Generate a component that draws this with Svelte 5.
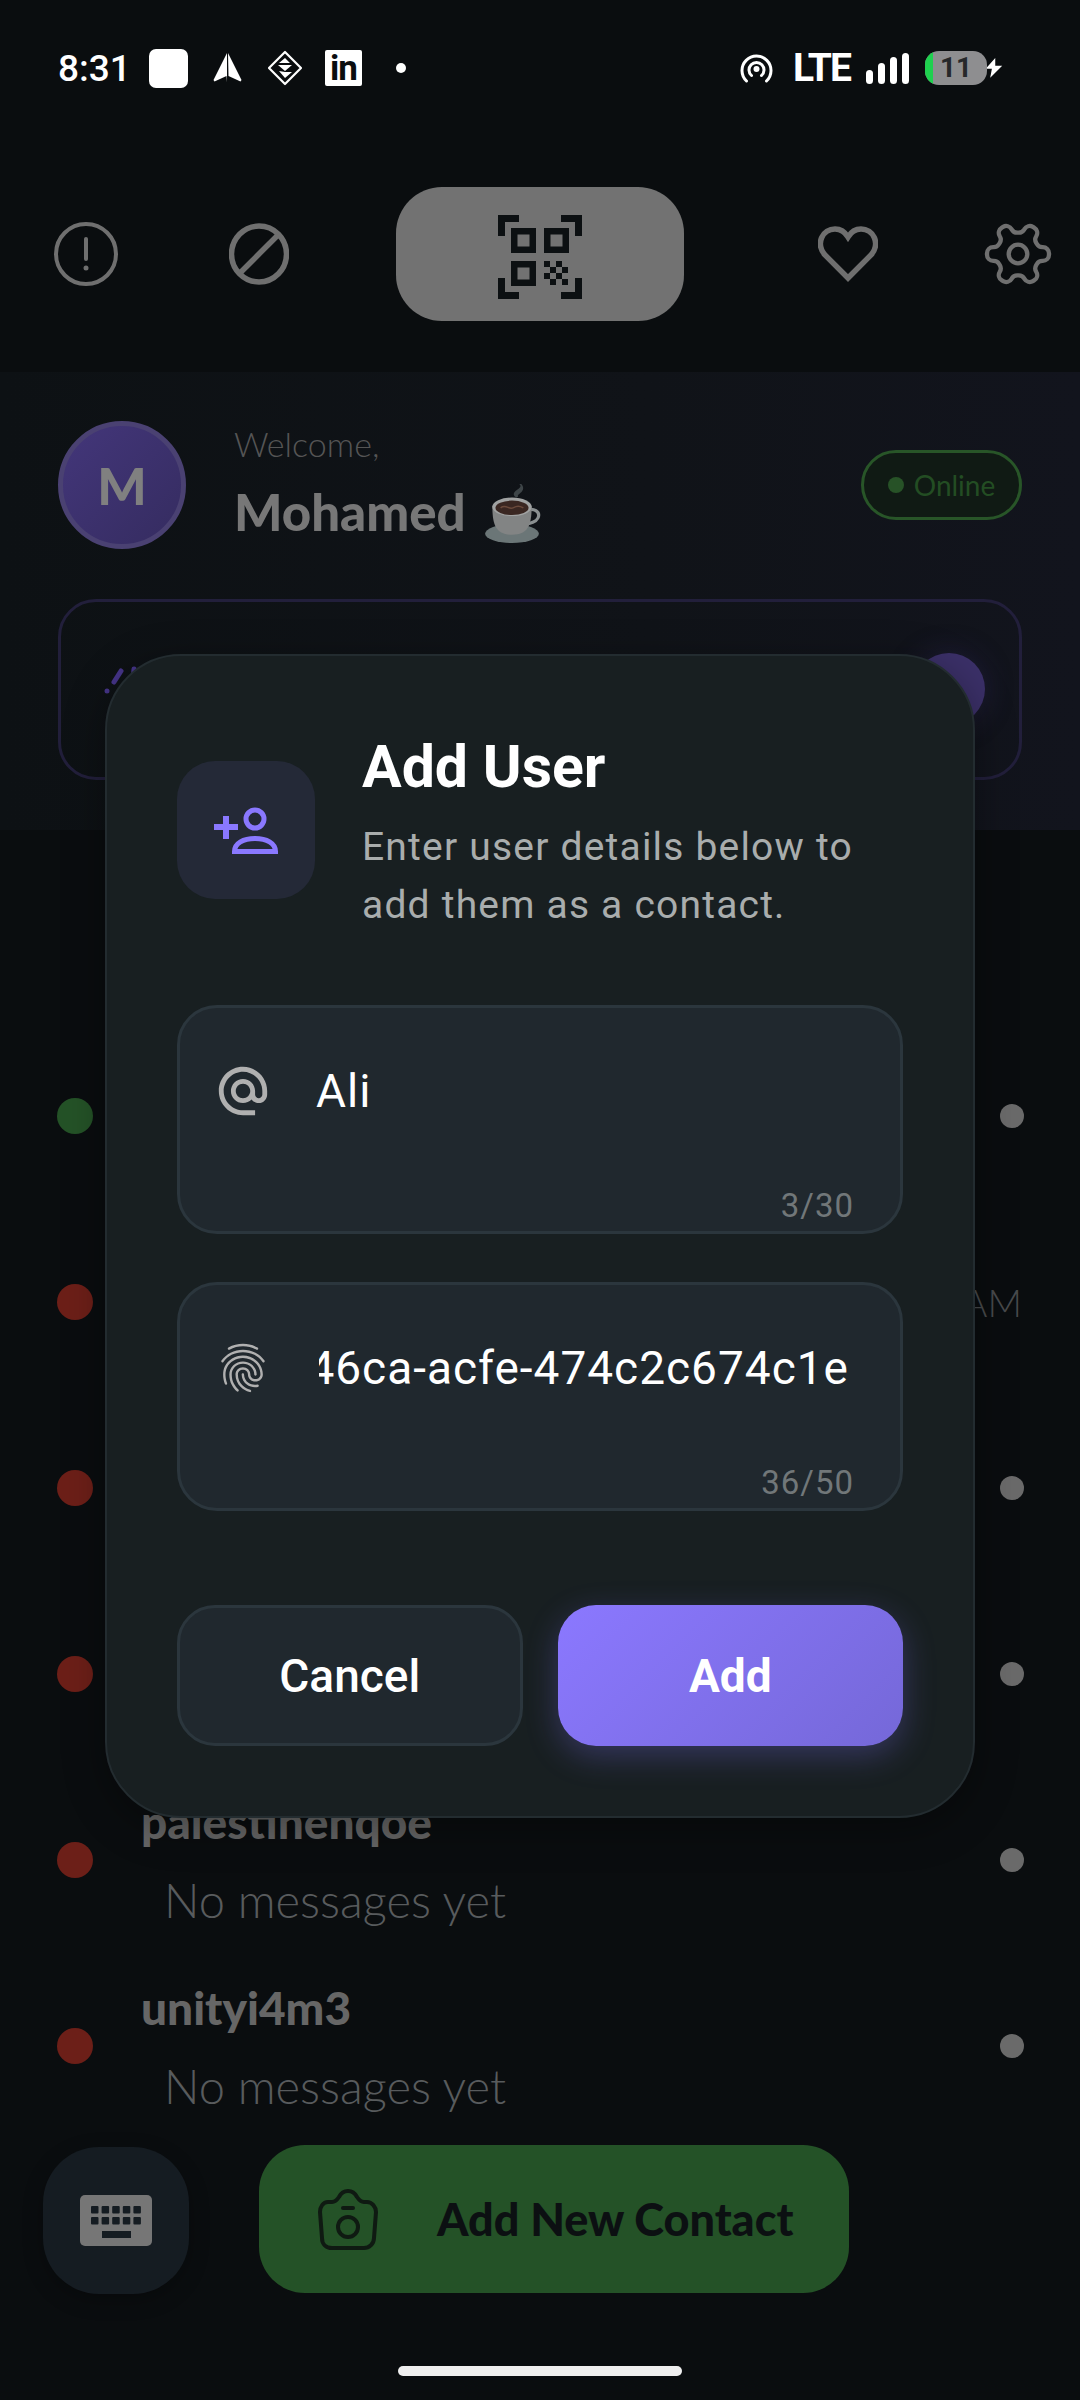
<script>
  const contacts = [
    { name: '', message: '', online: true, time: '' },
    { name: '', message: '', online: false, time: '9:14 AM' },
    { name: '', message: '', online: false, time: '' },
    { name: '', message: '', online: false, time: '' },
    { name: 'palestinenqoe', message: 'No messages yet', online: false, time: '' },
    { name: 'unityi4m3', message: 'No messages yet', online: false, time: '' }
  ];
</script>

<div class="page">
  <div class="statusbar">
    <div class="status-left">
      <span class="clock">8:31</span>
      <span class="blank"></span>
      <svg class="plane" viewBox="0 0 29 30"><path d="M15 0 28.500 27l-1 1.500L15.500 23zM14 0 .5 27l1 1.500L13.500 23l.5 6.500z" fill="#fff"/></svg>
      <svg class="diamond" viewBox="0 0 36 36">
        <path d="M18 2 34 18 18 34 2 18z" fill="none" stroke="#fff" stroke-width="2.200" stroke-linejoin="round"/>
        <path d="M18 8l5 5h-5zM18 13h-6l6-5zM11 15h7v6zM18 15h7l-7 6zM18 22h7l-7 6zM12 21l6 1v6z" fill="#fff"/>
      </svg>
      <span class="linkedin">in</span>
      <span class="notif-dot"></span>
    </div>
    <div class="status-right">
      <svg class="hotspot" viewBox="0 0 33 30" fill="none" stroke="#fff" stroke-width="3" stroke-linecap="round">
        <path d="M6.500 28A14.500 14.500 0 1 1 26.500 28"/>
        <path d="M11.500 22.500A7.500 7.500 0 1 1 21.500 22.500"/>
        <circle cx="16.500" cy="16" r="3" fill="#fff" stroke="none"/>
      </svg>
      <span class="lte">LTE</span>
      <div class="signal">
        <span style="height: 14px"></span>
        <span style="height: 21px"></span>
        <span style="height: 27px"></span>
        <span style="height: 31px"></span>
      </div>
      <div class="battery"><span class="charge"></span><span class="level">11</span></div>
      <svg class="bolt" viewBox="0 0 22 24"><path d="M13 0 1 13.500h7L6 24 21 9h-8z" fill="#fff" stroke="#0a0d0f" stroke-width="1.500"/></svg>
    </div>
  </div>

  <div class="toolbar">
    <svg class="alert" viewBox="0 0 64 64" fill="none" stroke="#6f6f6f" stroke-width="4">
      <circle cx="32" cy="32" r="30"/>
      <path d="M32 17v20" stroke-linecap="round"/>
      <circle cx="32" cy="46" r="2.500" fill="#6f6f6f" stroke="none"/>
    </svg>
    <svg class="ban" viewBox="0 0 60 62" fill="none" stroke="#6f6f6f" stroke-width="5.500">
      <ellipse cx="30" cy="31" rx="27.500" ry="28"/>
      <path d="M11 50 49 12"/>
    </svg>
    <div class="qr-btn">
      <svg viewBox="0 0 84 84" width="84" height="84" fill="#0c1012">
        <path d="M0 0h21v7H7v14H0zM63 0h21v21h-7V7H63zM0 63h7v14h14v7H0zM77 63h7v21H63v-7h14z"/>
        <path fill-rule="evenodd" d="M13 13h25v25H13zM19.500 19.500v12h12v-12zM46 13h25v25H46zM52.500 19.500v12h12v-12zM13 46h25v25H13zM19.500 52.500v12h12v-12z"/>
        <path d="M46 46h6v6h-6zM58 46h6v6h-6zM52 52h6v6h-6zM64 52h6v6h-6zM46 58h6v6h-6zM58 58h6v6h-6zM52 64h6v6h-6zM64 64h6v6h-6z"/>
      </svg>
    </div>
    <svg class="heart" viewBox="0 0 60 56" fill="none" stroke="#6f6f6f" stroke-width="5.500">
      <path d="M30 52 7 29C-3 17 5 3 17 3c6 0 10 3 13 8 3-5 7-8 13-8 12 0 20 14 10 26z"/>
    </svg>
    <svg class="gear" viewBox="2 2 20 20" fill="none" stroke="#6f6f6f" stroke-width="1.400">
      <g transform="rotate(90 12 12)">
        <path d="M12.220 2h-.44a2 2 0 0 0-2 2v.18a2 2 0 0 1-1 1.730l-.43.25a2 2 0 0 1-2 0l-.15-.08a2 2 0 0 0-2.730.73l-.22.38a2 2 0 0 0 .73 2.730l.15.1a2 2 0 0 1 1 1.720v.51a2 2 0 0 1-1 1.740l-.15.09a2 2 0 0 0-.73 2.730l.22.38a2 2 0 0 0 2.730.73l.15-.08a2 2 0 0 1 2 0l.43.25a2 2 0 0 1 1 1.730V20a2 2 0 0 0 2 2h.44a2 2 0 0 0 2-2v-.18a2 2 0 0 1 1-1.730l.43-.25a2 2 0 0 1 2 0l.15.08a2 2 0 0 0 2.730-.73l.22-.39a2 2 0 0 0-.73-2.730l-.15-.08a2 2 0 0 1-1-1.740v-.5a2 2 0 0 1 1-1.740l.15-.09a2 2 0 0 0 .73-2.730l-.22-.38a2 2 0 0 0-2.730-.73l-.15.08a2 2 0 0 1-2 0l-.43-.25a2 2 0 0 1-1-1.730V4a2 2 0 0 0-2-2z"/>
        <circle cx="12" cy="12" r="3"/>
      </g>
    </svg>
  </div>

  <section class="panel">
    <div class="profile">
      <div class="avatar">M</div>
      <div class="who">
        <div class="welcome">Welcome,</div>
        <div class="username">
          Mohamed
          <svg class="coffee" viewBox="0 0 58 58">
            <path d="M36 1c5 4-7 6-5 11 1 2 3 2 4 1-2-2 9-5 3-12z" fill="#3e4548"/>
            <ellipse cx="29" cy="49" rx="26" ry="9" fill="#6b7677"/>
            <path d="M42 27c8-4 15 1 12 7-2 4-7 5-12 6" fill="none" stroke="#8a8f90" stroke-width="3"/>
            <path d="M10 22c0 18 3 28 19 28s19-10 19-28z" fill="#828484"/>
            <ellipse cx="29" cy="23" rx="19" ry="9" fill="#a0a2a2"/>
            <ellipse cx="29" cy="24" rx="16" ry="7" fill="#3a2722"/>
            <path d="M18 24c5-4 8 2 12 0s6-2 10 0" fill="none" stroke="#6b4a3c" stroke-width="1.500"/>
          </svg>
        </div>
      </div>
      <div class="pill"><span class="pill-dot"></span>Online</div>
    </div>
    <div class="conn-card">
      <svg class="spark" viewBox="0 0 40 40" fill="none" stroke="#46358a" stroke-width="5" stroke-linecap="round">
        <path d="M21 6 14 17"/>
        <path d="M34 4 33 16"/>
        <circle cx="7" cy="26" r="2.500" fill="#46358a" stroke="none"/>
      </svg>
      <span class="conn-label">Connection</span>
      <span class="conn-toggle"></span>
    </div>
  </section>

  <div class="contacts">
    {#each contacts as c}
      <div class="contact">
        <span class="presence" class:online={c.online}></span>
        <div class="contact-body">
          <div class="contact-name">{c.name}</div>
          <div class="contact-msg">{c.message}</div>
        </div>
        {#if c.time}
          <span class="contact-time">{c.time}</span>
        {:else}
          <span class="unread"></span>
        {/if}
      </div>
    {/each}
  </div>

  <div class="bottom">
    <div class="kbd-btn">
      <svg viewBox="0 0 72 51" width="72" height="51">
        <rect width="72" height="51" rx="5" fill="#767676"/>
        <g fill="#151c22">
          {#each [0, 1] as r}
            {#each [0, 1, 2, 3, 4] as k}
              <rect x={11 + k * 10.600} y={11 + r * 11} width="7.500" height="7.500" rx="1"/>
            {/each}
          {/each}
          <rect x="22" y="36" width="29" height="7"/>
        </g>
      </svg>
    </div>
    <div class="add-contact">
      <svg class="camera" viewBox="0 0 60 61" fill="none" stroke="#0f1a12" stroke-width="4" stroke-linecap="round" stroke-linejoin="round">
        <path d="M10 13h4c3 0 5-2 7-5 2-4 5-6 9-6s7 2 9 6c2 3 4 5 7 5h3c5 0 9 5 9 10l-2 26c0 6-5 10-10 10H14C8 59 4 55 4 49L2 23c0-5 3-10 8-10z"/>
        <path d="M25 19h10"/>
        <circle cx="30" cy="38" r="10"/>
      </svg>
      <span>Add New Contact</span>
    </div>
  </div>

  <div class="home"></div>

  <div class="modal">
    <div class="modal-head">
      <div class="modal-icon">
        <svg viewBox="0 0 64 47" width="64" height="47" fill="none" stroke="#8a78ff" stroke-width="5">
          <circle cx="41" cy="12" r="9"/>
          <path d="M0 20h24M12 9v23" stroke-width="6"/>
          <path d="M20.500 44.500c0-8.500 9-13 20.500-13s20.500 4.500 20.500 13z"/>
        </svg>
      </div>
      <div class="modal-text">
        <h2>Add User</h2>
        <p>Enter user details below to add them as a contact.</p>
      </div>
    </div>

    <div class="field first">
      <div class="field-row">
        <svg viewBox="0 0 24 24" width="58" height="58"><path fill="#b0b0b0" d="M12 2C6.480 2 2 6.480 2 12s4.480 10 10 10h5v-2h-5c-4.340 0-8-3.660-8-8s3.660-8 8-8 8 3.660 8 8v1.430c0 .79-.71 1.570-1.500 1.570s-1.500-.78-1.500-1.570V12c0-2.760-2.240-5-5-5s-5 2.240-5 5 2.240 5 5 5c1.380 0 2.640-.56 3.540-1.470.65.89 1.770 1.470 2.960 1.470 1.970 0 3.500-1.600 3.500-3.570V12c0-5.520-4.480-10-10-10zm0 13c-1.660 0-3-1.340-3-3s1.340-3 3-3 3 1.340 3 3-1.340 3-3 3z"/></svg>
        <div class="value">Ali</div>
      </div>
      <div class="counter">3/30</div>
    </div>

    <div class="field">
      <div class="field-row">
        <svg viewBox="0 0 24 24" width="58" height="58"><path fill="#b0b0b0" d="M17.810 4.470c-.08 0-.16-.02-.23-.06C15.660 3.420 14 3 12.010 3c-1.980 0-3.860.47-5.580 1.410-.24.13-.54.04-.68-.2-.13-.24-.04-.55.2-.68C7.820 2.520 9.860 2 12.010 2c2.130 0 3.990.47 6.030 1.520.25.13.34.43.21.67-.09.18-.26.28-.44.28zM3.500 9.720c-.1 0-.2-.03-.29-.09-.23-.16-.28-.47-.12-.7.99-1.400 2.250-2.500 3.750-3.270C9.980 4.040 14 4.030 17.150 5.650c1.500.77 2.760 1.860 3.750 3.250.16.22.11.54-.12.7-.23.16-.54.11-.7-.12-.9-1.260-2.040-2.250-3.390-2.940-2.870-1.470-6.540-1.470-9.400.01-1.360.7-2.500 1.700-3.400 2.960-.08.14-.23.21-.39.21zm6.250 12.070c-.13 0-.26-.05-.35-.15-.87-.87-1.340-1.430-2.010-2.640-.69-1.230-1.050-2.730-1.050-4.340 0-2.970 2.540-5.390 5.660-5.390s5.660 2.420 5.660 5.390c0 .28-.22.5-.5.5s-.5-.22-.5-.5c0-2.420-2.090-4.390-4.660-4.390-2.570 0-4.660 1.970-4.660 4.390 0 1.440.32 2.770.93 3.850.64 1.150 1.080 1.640 1.850 2.420.19.2.19.51 0 .71-.11.1-.24.15-.37.15zm7.170-1.850c-1.190 0-2.240-.3-3.100-.89-1.490-1.010-2.380-2.650-2.380-4.390 0-.28.22-.5.5-.5s.5.22.5.5c0 1.410.72 2.740 1.940 3.560.71.48 1.540.71 2.540.71.24 0 .64-.03 1.040-.1.27-.05.53.13.58.41.05.27-.13.53-.41.58-.57.11-1.070.12-1.210.12zM14.910 22c-.04 0-.09-.01-.13-.02-1.590-.44-2.630-1.030-3.720-2.100-1.400-1.390-2.170-3.240-2.170-5.220 0-1.620 1.380-2.940 3.080-2.940 1.700 0 3.080 1.320 3.080 2.940 0 1.070.93 1.940 2.080 1.940s2.080-.87 2.080-1.940c0-3.770-3.250-6.830-7.250-6.830-2.840 0-5.440 1.580-6.610 4.030-.39.81-.59 1.760-.59 2.800 0 .78.07 2.010.67 3.610.1.26-.03.55-.29.64-.26.1-.55-.04-.64-.29-.49-1.310-.73-2.610-.73-3.960 0-1.200.23-2.290.68-3.240 1.330-2.790 4.280-4.600 7.510-4.600 4.550 0 8.250 3.510 8.250 7.830 0 1.620-1.380 2.940-3.080 2.940s-3.080-1.320-3.080-2.940c0-1.070-.93-1.940-2.080-1.940s-2.080.87-2.080 1.940c0 1.710.66 3.310 1.870 4.510.95.94 1.860 1.460 3.270 1.850.27.07.42.35.35.61-.05.23-.26.38-.47.38z"/></svg>
        <div class="value scroll"><span>8f2d1c3a-9b7e-46ca-acfe-474c2c674c1e</span></div>
      </div>
      <div class="counter">36/50</div>
    </div>

    <div class="actions">
      <button class="btn cancel">Cancel</button>
      <button class="btn add">Add</button>
    </div>
  </div>
</div>

<style>
  :global(body) {
    background: #0a0d0f;
  }

  .page {
    position: relative;
    width: 1080px;
    height: 2400px;
    overflow: hidden;
    background: #0a0d0f;
    font-family: "Lato", "Noto Sans", sans-serif;
  }

  /* status bar */
  .statusbar {
    height: 136px;
    display: flex;
    justify-content: space-between;
    align-items: center;
    padding: 0 75px 0 59px;
    font-family: "Roboto", sans-serif;
    color: #fff;
  }
  .status-left, .status-right {
    display: flex;
    align-items: center;
  }
  .clock {
    width: 67px;
    margin-left: -1px;
    margin-right: 1px;
    font-size: 37px;
    font-weight: 500;
  }
  .blank {
    width: 39px;
    height: 39px;
    margin-left: 23px;
    background: #fff;
    border-radius: 7px;
  }
  .plane {
    width: 29px;
    height: 30px;
    margin-left: 25px;
  }
  .diamond {
    width: 36px;
    height: 36px;
    margin-left: 25px;
  }
  .linkedin {
    width: 37px;
    height: 36px;
    margin-left: 22px;
    background: #fff;
    border-radius: 2px;
    color: #0a0d0f;
    font-size: 35px;
    font-weight: 700;
    line-height: 38px;
    text-align: center;
    letter-spacing: -1px;
  }
  .notif-dot {
    width: 10px;
    height: 10px;
    margin-left: 34px;
    background: #fff;
    border-radius: 50%;
  }
  .hotspot {
    width: 33px;
    height: 30px;
    margin-left: -3px;
  }
  .lte {
    margin-left: 20px;
    width: 57px;
    font-size: 39px;
    font-weight: 700;
    line-height: 40px;
    letter-spacing: -2px;
  }
  .signal {
    display: flex;
    align-items: flex-end;
    gap: 5px;
    margin-left: 16px;
  }
  .signal span {
    width: 7px;
    background: #fff;
    border-radius: 4px;
  }
  .battery {
    position: relative;
    width: 62px;
    height: 34px;
    margin-left: 16px;
    background: #8e8e90;
    border-radius: 14px;
    overflow: hidden;
    text-align: center;
    color: #26282a;
    font-size: 28px;
    font-weight: 700;
    line-height: 34px;
  }
  .charge {
    position: absolute;
    left: 0;
    top: 0;
    bottom: 0;
    width: 8px;
    background: #1fd14f;
  }
  .bolt {
    width: 22px;
    height: 24px;
    margin-left: -4px;
  }

  /* top actions */
  .toolbar {
    display: flex;
    align-items: center;
    height: 134px;
    margin-top: 51px;
    padding-left: 54px;
  }
  .alert {
    width: 64px;
    height: 64px;
  }
  .ban {
    width: 60px;
    height: 62px;
    margin-left: 111px;
  }
  .qr-btn {
    width: 288px;
    height: 134px;
    margin-left: 107px;
    padding-top: 6px;
    box-sizing: border-box;
    display: flex;
    align-items: center;
    justify-content: center;
    background: #727272;
    border-radius: 46px;
  }
  .heart {
    width: 60px;
    height: 56px;
    margin-left: 134px;
  }
  .gear {
    width: 62px;
    height: 62px;
    margin-left: 109px;
    overflow: visible;
  }

  /* profile panel */
  .panel {
    height: 458px;
    box-sizing: border-box;
    margin-top: 51px;
    padding: 49px 58px 0;
    background: linear-gradient(90deg, #0d1114 0%, #101318 60%, #12141d 100%);
  }
  .profile {
    display: flex;
    align-items: center;
    height: 128px;
  }
  .avatar {
    width: 128px;
    height: 128px;
    box-sizing: border-box;
    flex: none;
    display: flex;
    align-items: center;
    justify-content: center;
    border: 5px solid #4a4172;
    border-radius: 50%;
    background: linear-gradient(135deg, #43367a, #352c60);
    color: #808080;
    font-size: 52px;
    font-weight: 900;
  }
  .who {
    flex: 1;
    margin-left: 48px;
  }
  .welcome {
    font-size: 34px;
    font-weight: 300;
    color: #555;
    line-height: 44px;
  }
  .username {
    display: flex;
    align-items: center;
    gap: 16px;
    height: 74px;
    margin-top: 8px;
    font-size: 51px;
    font-weight: 900;
    color: #777;
  }
  .coffee {
    width: 60px;
    height: 60px;
    margin-top: 4px;
  }
  .pill {
    width: 161px;
    height: 70px;
    box-sizing: border-box;
    display: flex;
    align-items: center;
    justify-content: center;
    gap: 10px;
    border: 3px solid #285528;
    border-radius: 35px;
    background: #101a14;
    color: #234d23;
    font-size: 28px;
  }
  .pill-dot {
    width: 16px;
    height: 16px;
    background: #275227;
    border-radius: 50%;
  }
  .conn-card {
    height: 181px;
    box-sizing: border-box;
    display: flex;
    align-items: flex-start;
    margin-top: 50px;
    padding: 53px 34px 0 39px;
    border: 3px solid #221f3b;
    border-radius: 38px;
  }
  .spark {
    width: 40px;
    height: 40px;
    margin-top: 10px;
  }
  .conn-label {
    margin: -7px 0 0 55px;
    flex: 1;
    color: #666;
    font-size: 38px;
  }
  .conn-toggle {
    width: 72px;
    height: 72px;
    margin-top: -2px;
    background: #3b3068;
    border-radius: 50%;
    box-shadow: 0 0 30px rgba(70, 55, 140, 0.25);
  }

  /* contact list */
  .contacts {
    margin-top: 193px;
  }
  .contact {
    height: 186px;
    display: flex;
    align-items: center;
    padding: 0 56px 0 57px;
  }
  .presence {
    width: 36px;
    height: 36px;
    flex: none;
    background: #6c1f18;
    border-radius: 50%;
  }
  .presence.online {
    background: #245227;
  }
  .contact-body {
    flex: 1;
    margin-left: 48px;
  }
  .contact-name {
    height: 76px;
    color: #666;
    font-size: 46px;
    font-weight: 900;
    line-height: 76px;
  }
  .contact-msg {
    height: 76px;
    margin-left: 23px;
    color: #585b5d;
    font-size: 47px;
    font-weight: 300;
    line-height: 80px;
  }
  .unread {
    width: 24px;
    height: 24px;
    flex: none;
    background: #6a6a6a;
    border-radius: 50%;
  }
  .contact-time {
    margin-right: 2px;
    color: #484a4c;
    font-size: 38px;
    font-weight: 300;
  }

  /* bottom actions */
  .bottom {
    display: flex;
    align-items: center;
    height: 148px;
    margin-top: 6px;
    padding-left: 43px;
  }
  .kbd-btn {
    width: 146px;
    height: 147px;
    margin-top: 3px;
    display: flex;
    align-items: center;
    justify-content: center;
    background: #151c22;
    border-radius: 56px;
    box-shadow: 0 6px 20px rgba(0, 0, 0, 0.25);
  }
  .add-contact {
    width: 590px;
    height: 148px;
    box-sizing: border-box;
    display: flex;
    align-items: center;
    margin-left: 70px;
    padding-left: 59px;
    background: #245227;
    border-radius: 46px;
    color: #0c1012;
    font-size: 45px;
    font-weight: 900;
  }
  .camera {
    width: 60px;
    height: 61px;
    margin-right: 59px;
    overflow: visible;
  }

  .home {
    width: 284px;
    height: 10px;
    margin: 73px auto 0;
    background: #efefef;
    border-radius: 5px;
  }

  /* dialog on top of the dimmed page */
  .modal {
    position: absolute;
    left: 105px;
    top: 654px;
    width: 870px;
    height: 1164px;
    box-sizing: border-box;
    padding: 76px 70px 0;
    background: #181f21;
    border: 2px solid #232c30;
    border-radius: 76px;
    box-shadow: 0 10px 40px rgba(0, 0, 0, 0.35);
    font-family: "Roboto", sans-serif;
  }
  .modal-head {
    display: flex;
    height: 201px;
  }
  .modal-icon {
    width: 138px;
    height: 138px;
    flex: none;
    display: flex;
    align-items: center;
    justify-content: center;
    margin-top: 29px;
    background: #242937;
    border-radius: 38px;
  }
  .modal-text {
    margin-left: 47px;
  }
  h2 {
    margin: 0;
    color: #fff;
    font-size: 59px;
    font-weight: 700;
    line-height: 70px;
  }
  .modal-text p {
    margin: 16px 0 0;
    color: #a9adad;
    font-size: 39px;
    line-height: 58px;
    letter-spacing: 1.200px;
  }
  .field {
    height: 229px;
    box-sizing: border-box;
    display: flex;
    flex-direction: column;
    margin-top: 48px;
    padding: 47px 46px 5px 34px;
    background: #20282e;
    border: 3px solid #2b363d;
    border-radius: 40px;
  }
  .field.first {
    margin-top: 72px;
  }
  .field-row {
    display: flex;
    align-items: center;
    height: 72px;
  }
  .field-row svg {
    flex: none;
  }
  .value {
    margin-left: 44px;
    color: #fff;
    font-size: 46px;
    letter-spacing: 1px;
  }
  .scroll {
    flex: 1;
    display: flex;
    justify-content: flex-end;
    overflow: hidden;
    white-space: nowrap;
    margin-left: 47px;
    margin-right: 5px;
  }
  .scroll span {
    flex: none;
  }
  .counter {
    margin-top: auto;
    color: #717779;
    font-size: 33px;
    line-height: 40px;
    text-align: right;
    letter-spacing: 1px;
  }
  .actions {
    display: grid;
    grid-template-columns: 1fr 1fr;
    gap: 35px;
    margin-top: 94px;
  }
  .btn {
    height: 141px;
    box-sizing: border-box;
    padding: 0;
    border-radius: 38px;
    color: #fff;
    font-family: inherit;
    font-size: 46px;
    font-weight: 500;
  }
  .cancel {
    background: #20282e;
    border: 3px solid #2b363d;
  }
  .add {
    background: linear-gradient(135deg, #8b78ff, #7568d8);
    border: none;
    font-weight: 700;
    box-shadow: 0 10px 32px rgba(124, 108, 240, 0.3);
  }
</style>
